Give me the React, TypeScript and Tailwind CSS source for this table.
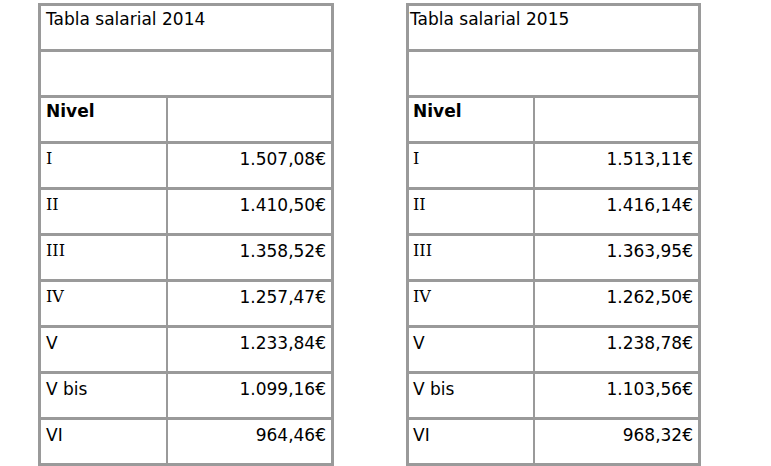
type Row = { nivel: string; amount: string; serif?: boolean }

const TABLES: { year: string; rows: Row[] }[] = [
  {
    year: '2014',
    rows: [
      { nivel: 'I', amount: '1.507,08€', serif: true },
      { nivel: 'II', amount: '1.410,50€', serif: true },
      { nivel: 'III', amount: '1.358,52€', serif: true },
      { nivel: 'IV', amount: '1.257,47€', serif: true },
      { nivel: 'V', amount: '1.233,84€' },
      { nivel: 'V bis', amount: '1.099,16€' },
      { nivel: 'VI', amount: '964,46€' },
    ],
  },
  {
    year: '2015',
    rows: [
      { nivel: 'I', amount: '1.513,11€', serif: true },
      { nivel: 'II', amount: '1.416,14€', serif: true },
      { nivel: 'III', amount: '1.363,95€', serif: true },
      { nivel: 'IV', amount: '1.262,50€', serif: true },
      { nivel: 'V', amount: '1.238,78€' },
      { nivel: 'V bis', amount: '1.103,56€' },
      { nivel: 'VI', amount: '968,32€' },
    ],
  },
]

function SalaryTable({ year, rows, first }: { year: string; rows: Row[]; first: boolean }) {
  return (
    <div
      className={`flex shrink-0 flex-col border-[3px] border-[#9a9a9a] ${first ? 'w-[296px]' : 'w-[295px]'}`}
    >
      {/* título */}
      <div className={`h-[43px] pt-[3px] ${first ? 'pl-[5px]' : 'pl-[1px]'}`}>Tabla salarial {year}</div>
      <div className="h-[46px] border-t-[3px] border-[#9a9a9a]" />

      {/* cabecera */}
      <div className="flex h-[46px] border-t-[3px] border-[#9a9a9a]">
        <div
          className={`border-r-2 border-[#9a9a9a] pt-[3px] font-bold ${first ? 'w-[127px] pl-[5px]' : 'w-[126px] pl-[4px]'}`}
        >
          Nivel
        </div>
        <div className="flex-1" />
      </div>

      {rows.map((row) => (
        <div key={row.nivel} className="flex h-[46px] border-t-[3px] border-[#9a9a9a]">
          <div
            className={`border-r-2 border-[#9a9a9a] ${first ? 'w-[127px] pl-[5px]' : 'w-[126px] pl-[4px]'} ${
              row.serif ? "pt-[5px] font-['DejaVu_Serif','Liberation_Serif',serif] text-[16px]" : 'pt-[5px]'
            }`}
          >
            {row.nivel}
          </div>
          <div className="flex-1 pr-[5px] pt-[5px] text-right">{row.amount}</div>
        </div>
      ))}

      {/* fila siguiente (cortada) */}
      <div className="flex h-[46px] border-t-[3px] border-[#9a9a9a]">
        <div className={`border-r-2 border-[#9a9a9a] ${first ? 'w-[127px]' : 'w-[126px]'}`} />
        <div className="flex-1" />
      </div>
    </div>
  )
}

export default function App() {
  return (
    <div className="h-[466px] w-[771px] overflow-hidden bg-white font-['DejaVu_Sans',sans-serif] text-[17px] leading-[20px] text-black">
      <div className="flex items-start gap-[72px] pl-[38px] pt-[3px]">
        {TABLES.map((t, i) => (
          <SalaryTable key={t.year} year={t.year} rows={t.rows} first={i === 0} />
        ))}
      </div>
    </div>
  )
}
